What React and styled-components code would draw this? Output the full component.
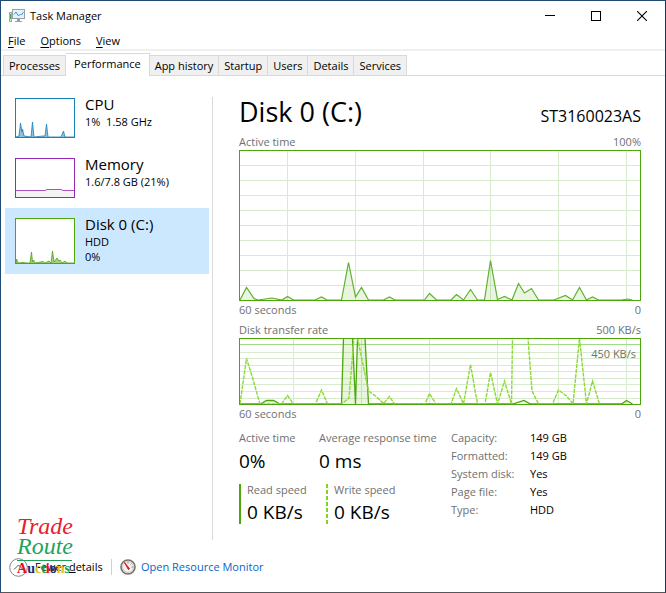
import React, { useState } from 'react';
import styled, { createGlobalStyle, css } from 'styled-components';

const GlobalStyle = createGlobalStyle`
  * {
    box-sizing: border-box;
  }

  body {
    margin: 0;
    background: #fff;
    color: #000;
    font-family: 'Open Sans', 'Noto Sans', sans-serif;
    font-size: 11px;
    line-height: 16px;
  }

  button {
    margin: 0;
    padding: 0;
    border: none;
    background: none;
    color: inherit;
    font: inherit;
    text-align: left;
  }
`;

const Window = styled.div`
  display: flex;
  flex-direction: column;
  min-height: 100vh;
  border: 1px solid #1f4a73;
  border-right-color: #1c3557;
  border-bottom-color: #55565a;
  background: #fff;
`;

const TitleBar = styled.header`
  display: flex;
  align-items: center;
  height: 30px;
  padding-left: 8px;

  h1 {
    flex: 1;
    margin: 0 0 0 5px;
    font-size: 11px;
    font-weight: 400;
  }
`;

const WindowButton = styled.button`
  display: flex;
  justify-content: center;
  align-items: center;
  width: 46px;
  height: 28px;

  &:hover {
    background: #e5e5e5;
  }
`;

const MenuBar = styled.nav`
  display: flex;
  gap: 15px;
  height: 20px;
  padding: 1px 0 0 7px;
  border-bottom: 2px solid #f0f0f0;

  u {
    text-underline-offset: 2px;
  }
`;

const TabStrip = styled.div`
  display: flex;
  align-items: flex-end;
  height: 25px;
  padding-left: 2px;
  border-bottom: 1px solid #d9d9d9;
`;

const Tab = styled.button`
  height: 20px;
  padding: 0 5px;
  border: 1px solid #d9d9d9;
  border-width: 1px 1px 0 0;
  background: #f0f0f0;
  white-space: nowrap;

  &:first-child {
    border-left-width: 1px;
  }

  ${(props) => props.$active && css`
    height: 23px;
    margin-bottom: -1px;
    padding: 0 8px 2px;
    background: #fff;
  `}
`;

const Body = styled.div`
  display: flex;
  flex: 1;
  padding-top: 12px;
`;

const Sidebar = styled.div`
  display: flex;
  flex-direction: column;
  width: 208px;
  padding-left: 4px;
`;

const Divider = styled.div`
  width: 1px;
  margin: 9px 0 0 3px;
  background: #d9d9d9;
`;

const Resource = styled.button`
  display: flex;
  align-items: flex-start;
  gap: 10px;
  padding: 10px;
  background: ${(props) => (props.$active ? '#cce8ff' : 'transparent')};

  svg {
    flex: none;
    display: block;
  }
`;

const ResourceText = styled.span`
  display: flex;
  flex-direction: column;
  height: 40px;
  margin-top: -4px;
  line-height: 15px;
  white-space: pre;

  strong {
    font-size: 15px;
    font-weight: 400;
    line-height: 20px;
  }
`;

const Main = styled.main`
  flex: 1;
  min-width: 0;
  padding: 0 24px 0 26px;
`;

const Heading = styled.div`
  display: flex;
  justify-content: space-between;
  align-items: baseline;
  height: 45px;

  h2 {
    margin: 0;
    font-size: 27px;
    font-weight: 400;
    line-height: 48px;
  }

  span {
    font-size: 16px;
  }
`;

const ChartLabels = styled.div`
  display: flex;
  justify-content: space-between;
  height: ${(props) => props.$height || 17}px;
  color: #707070;
  line-height: 17px;
`;

const ChartBox = styled.div`
  position: relative;

  svg {
    display: block;
    width: 100%;
  }
`;

const ScaleLabel = styled.span`
  position: absolute;
  top: 8px;
  right: 5px;
  color: #707070;
`;

const Stats = styled.div`
  display: flex;
  padding-top: 7px;
`;

const StatGrid = styled.div`
  display: grid;
  grid-template-columns: 80px 132px;
  row-gap: 9px;
  align-content: start;
  padding-top: 1px;
`;

const SpeedRow = styled.div`
  display: grid;
  grid-column: 1 / 3;
  grid-template-columns: 87px 1fr;
`;

const Stat = styled.div`
  height: 45px;
  white-space: nowrap;
  color: #707070;

  b {
    display: block;
    color: #000;
    font-size: 19px;
    font-weight: 400;
    line-height: 30px;
  }
`;

const Speed = styled(Stat)`
  height: 40px;
  padding-left: 8px;
  background: ${(props) => (props.$dotted
    ? 'repeating-linear-gradient(#82d41e 0 4px, #fff 4px 6px)'
    : 'linear-gradient(#4da60c, #4da60c)')} left top / 2px 100% no-repeat;
  line-height: 11px;

  b {
    line-height: 34px;
  }
`;

const Details = styled.dl`
  display: grid;
  grid-template-columns: 79px auto;
  align-content: start;
  margin: 0;
  line-height: 18px;
  white-space: nowrap;

  dt {
    color: #707070;
  }

  dd {
    margin: 0;
  }
`;

const Footer = styled.footer`
  position: relative;
  display: flex;
  align-items: center;
  height: 52px;
  padding: 2px 0 0 8px;
`;

const FewerButton = styled.button`
  display: flex;
  align-items: center;
  gap: 7px;
  width: 95px;
  white-space: nowrap;
`;

const MonitorLink = styled.a`
  display: flex;
  align-items: center;
  gap: 5px;
  margin-left: 7px;
  padding-left: 8px;
  border-left: 1px solid #d0d0d0;
  color: #0a63c9;
  text-decoration: none;
`;

/* shop stamp, lies over the footer */
const Stamp = styled.div`
  position: absolute;
  left: 16px;
  bottom: 15px;
  width: 55px;
  font-family: 'Liberation Serif', serif;
  pointer-events: none;

  div {
    font-size: 24px;
    font-style: italic;
    line-height: 20px;
    color: #e8202c;
  }

  div + div {
    padding-bottom: 4px;
    border-bottom: 1px solid #1f9d57;
    color: #1fa35b;
  }

  p {
    margin: 0;
    font-size: 14px;
    font-weight: 700;
    line-height: 16px;
  }
`;

const Letter = styled.span`
  color: ${(props) => props.$color};
`;

const stampLetters = [
  ['A', '#e8101c'], ['u', '#1b2c7a'], ['c', '#e9c11c'], ['t', '#13a04c'],
  ['i', '#e8101c'], ['o', '#1b2c7a'], ['n', '#e9c11c'], ['s', '#13a04c'],
];

const tabs = ['Processes', 'Performance', 'App history', 'Startup', 'Users', 'Details', 'Services'];

const resources = [
  {
    name: 'CPU',
    lines: ['1%  1.58 GHz'],
    color: '#1a80b8',
    fill: '#8dc0dc',
    height: 40,
    points: '1,39 4,38 5.5,25 7,34 7.5,31 9,38 16,39 17.5,24 19,39 28,38 30,38 31.5,26 33,39 46,39 48.5,33 50,39 59,39',
  },
  {
    name: 'Memory',
    lines: ['1.6/7.8 GB (21%)'],
    color: '#9528b4',
    fill: '#f4f2f4',
    height: 40,
    points: '0,39 0,32.5 30,32.5 32,31.5 46,31.5 48,32.5 60,32.5 60,39',
  },
  {
    name: 'Disk 0 (C:)',
    lines: ['HDD', '0%'],
    color: '#4da60c',
    fill: '#a3cf85',
    height: 46,
    points: '1,45 1.5,41 3,45 8,44.5 12,45 15,45 16.5,34 17.5,44 18.5,42 20,45 28,43.5 30,45 34,43 36,45 37.5,33 39,44 42,40 44,43 45,42 47,45 50,43 52,45 59,45',
  },
];

const activePoints = '1,150 7.5,137.5 15,148.5 19,150 33,148 43,150 48.5,146.5 54.5,150 76,150 82.5,147 88,150 102.5,150 109.5,112.5 116.5,147 122.5,137.5 129.5,150 144.5,150 150.5,147 156,150 185.5,150 190.5,143.5 197.5,150 212,150 217.5,144.5 224.5,150 231.5,139.5 238.5,150 245.5,150 251.5,110.5 258.5,149.5 265.5,146.5 273,150 279.5,133.5 285.5,143 292.5,138.5 299.5,150 315,150 326.5,145.5 333.5,150 340.5,137.5 347.5,150 353.5,147 359.5,150 382.5,150 388.5,149 393.5,150';

const readPoints = '1,66 21.5,66 24,64.5 27.5,62.5 34.5,62.5 41,66 102.5,66 104.5,0 113.5,0 116.5,66 118.5,0 126,0 129.5,66 273.5,66 285,62.5 291.5,66 382.5,66 387.5,62.5 393.5,66';

const writePoints = '1,66 7.5,20.5 13.5,39.5 21,66 42.5,66 48.5,57.5 54.5,66 76.5,66 82.5,52 88.5,66 102.5,66 110,60 115,0 118.5,0 129.5,53 136.5,58 144.5,65.5 150.5,58.5 155.5,66 186,66 190.5,55.5 197,66 212,66 217.5,50.5 224.5,66 231.5,26.5 238.5,66 246,66 251.5,34.5 258.5,66 265.5,43 272.5,66 273.5,0 289,0 293,53 299.5,66 313.5,66 319.5,52 327.5,58 334,66 340.5,0 347.5,66 353.5,43 360.5,66';

function Grid({ columns, rows, height }) {
  return (
    <g stroke="#d9ebcf">
      {columns.map((x) => <line key={x} x1={x} x2={x} y1="0" y2={height} />)}
      {rows.map((y) => <line key={y} x1="0" x2="402" y1={y} y2={y} />)}
    </g>
  );
}

function ActiveChart() {
  return (
    <ChartBox>
      <svg height="151" viewBox="0 0 402 151" preserveAspectRatio="none">
        <Grid
          columns={[48.5, 116.5, 184.5, 251.5, 319.5, 387.5]}
          rows={[15.5, 30.5, 45.5, 60.5, 75.5, 90.5, 105.5, 120.5, 135.5]}
          height={151}
        />
        <polyline points={activePoints} fill="#4da60c" fillOpacity="0.12" stroke="#5fb02c" strokeWidth="1.2" />
        <rect x="0.5" y="0.5" width="401" height="150" fill="none" stroke="#4da60c" />
      </svg>
    </ChartBox>
  );
}

function TransferChart() {
  return (
    <ChartBox>
      <svg height="67" viewBox="0 0 402 67" preserveAspectRatio="none">
        <Grid
          columns={[54.5, 122.5, 190.5, 258.5, 319.5, 387.5]}
          rows={[14.5, 20.5, 27.5, 33.5, 40.5, 46.5, 53.5, 60.5]}
          height={67}
        />
        <line x1="0" x2="402" y1="6.5" y2="6.5" stroke="#a0dc88" strokeWidth="1" />
        <polyline points={readPoints} fill="#4da60c" fillOpacity="0.12" stroke="#4da60c" strokeWidth="1.3" />
        <polyline points={writePoints} fill="none" stroke="#8cd936" strokeWidth="1.4" strokeDasharray="4 1" />
        <rect x="0.5" y="0.5" width="401" height="66" fill="none" stroke="#4da60c" />
      </svg>
      <ScaleLabel>450 KB/s</ScaleLabel>
    </ChartBox>
  );
}

function MiniChart({ color, fill, height, points }) {
  return (
    <svg width="60" height={height}>
      <rect x="0.5" y="0.5" width="59" height={height - 1} fill="#fff" />
      <polyline points={points} fill={fill} stroke={color} strokeWidth="0.8" />
      <rect x="0.5" y="0.5" width="59" height={height - 1} fill="none" stroke={color} />
    </svg>
  );
}

function AppIcon() {
  return (
    <svg width="16" height="16" viewBox="0 0 16 16">
      <rect x="0.5" y="4.5" width="2" height="9" fill="#d5d8da" stroke="#a5aaad" />
      <rect x="1" y="6" width="1" height="5" fill="#4ea64e" />
      <rect x="3.5" y="1.5" width="12" height="9" fill="#e2f2fb" stroke="#9a9fa3" />
      <path d="M5 6.5l2-2.5 2.5 4 2-2 1 1 2-3" fill="none" stroke="#3e9bd0" />
      <path d="M8 11h3v2h2v1H6v-1h2z" fill="#9a9fa3" />
    </svg>
  );
}

function MonitorIcon() {
  return (
    <svg width="16" height="16" viewBox="0 0 16 16">
      <circle cx="8" cy="8" r="7" fill="#f6f4f2" stroke="#77716d" strokeWidth="1.6" />
      <circle cx="8" cy="8" r="5.4" fill="none" stroke="#c9c4c0" strokeWidth="1" />
      <path d="M4.5 3.5L9.6 9.8 8.4 10.6z" fill="#cf2020" stroke="#cf2020" strokeLinejoin="round" />
      <path d="M8 3v1.5M11.5 4.5l-1 1M13 8h-1.5" stroke="#8a8581" />
    </svg>
  );
}

export default function App() {
  const [tab, setTab] = useState('Performance');
  const [resource, setResource] = useState('Disk 0 (C:)');

  return (
    <>
      <GlobalStyle />
      <Window>
        <TitleBar>
          <AppIcon />
          <h1>Task Manager</h1>
          <WindowButton aria-label="Minimize">
            <svg width="10" height="10"><path d="M0 4.5h10" stroke="#000" /></svg>
          </WindowButton>
          <WindowButton aria-label="Maximize">
            <svg width="10" height="10"><rect x="0.5" y="0.5" width="9" height="9" fill="none" stroke="#000" /></svg>
          </WindowButton>
          <WindowButton aria-label="Close">
            <svg width="10" height="10"><path d="M0 0l10 10M10 0L0 10" stroke="#000" strokeWidth="1.1" /></svg>
          </WindowButton>
        </TitleBar>

        <MenuBar>
          <button><u>F</u>ile</button>
          <button><u>O</u>ptions</button>
          <button><u>V</u>iew</button>
        </MenuBar>

        <TabStrip role="tablist">
          {tabs.map((name) => (
            <Tab
              key={name}
              role="tab"
              aria-selected={tab === name}
              $active={tab === name}
              onClick={() => setTab(name)}
            >
              {name}
            </Tab>
          ))}
        </TabStrip>

        <Body>
          <Sidebar>
            {resources.map((item) => (
              <Resource key={item.name} $active={resource === item.name} onClick={() => setResource(item.name)}>
                <MiniChart {...item} />
                <ResourceText>
                  <strong>{item.name}</strong>
                  {item.lines.map((line) => <span key={line}>{line}</span>)}
                </ResourceText>
              </Resource>
            ))}
          </Sidebar>
          <Divider />

          <Main>
            <Heading>
              <h2>Disk 0 (C:)</h2>
              <span>ST3160023AS</span>
            </Heading>

            <ChartLabels>
              <span>Active time</span>
              <span>100%</span>
            </ChartLabels>
            <ActiveChart />
            <ChartLabels $height={20}>
              <span>60 seconds</span>
              <span>0</span>
            </ChartLabels>

            <ChartLabels>
              <span>Disk transfer rate</span>
              <span>500 KB/s</span>
            </ChartLabels>
            <TransferChart />
            <ChartLabels>
              <span>60 seconds</span>
              <span>0</span>
            </ChartLabels>

            <Stats>
              <StatGrid>
                <Stat>Active time<b>0%</b></Stat>
                <Stat>Average response time<b>0 ms</b></Stat>
                <SpeedRow>
                  <Speed>Read speed<b>0 KB/s</b></Speed>
                  <Speed $dotted>Write speed<b>0 KB/s</b></Speed>
                </SpeedRow>
              </StatGrid>
              <Details>
                <dt>Capacity:</dt>
                <dd>149 GB</dd>
                <dt>Formatted:</dt>
                <dd>149 GB</dd>
                <dt>System disk:</dt>
                <dd>Yes</dd>
                <dt>Page file:</dt>
                <dd>Yes</dd>
                <dt>Type:</dt>
                <dd>HDD</dd>
              </Details>
            </Stats>
          </Main>
        </Body>

        <Footer>
          <FewerButton>
            <svg width="19" height="19">
              <circle cx="9.5" cy="9.5" r="8.8" fill="#fff" stroke="#858585" />
              <path d="M5 11.5l4.5-4.5 4.5 4.5" fill="none" stroke="#555" />
            </svg>
            <span>Fewer <u>d</u>etails</span>
          </FewerButton>
          <MonitorLink href="#">
            <MonitorIcon />
            Open Resource Monitor
          </MonitorLink>
          <Stamp>
            <div>Trade</div>
            <div>Route</div>
            <p>
              {stampLetters.map(([letter, color]) => (
                <Letter key={letter} $color={color}>{letter}</Letter>
              ))}
            </p>
          </Stamp>
        </Footer>
      </Window>
    </>
  );
}
